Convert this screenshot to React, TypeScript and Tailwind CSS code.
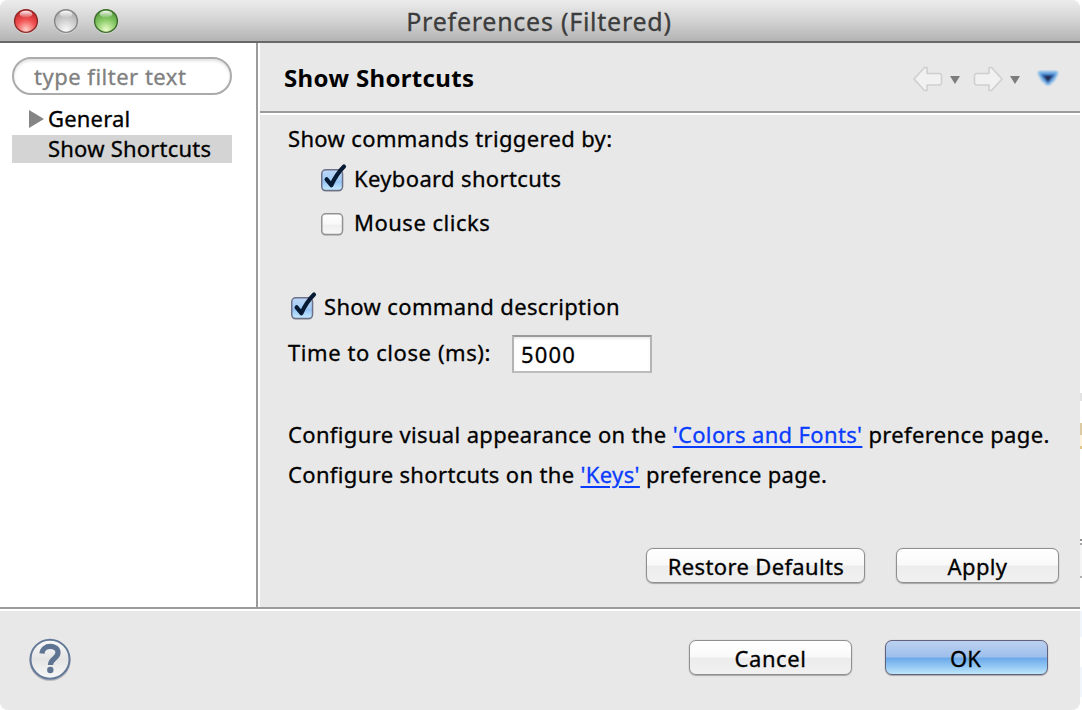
import type { ReactNode } from "react";

function Light({ id, rim, dark, light, glow }: { id: string; rim: string; dark: string; light: string; glow: string }) {
  return (
    <svg width="26" height="26" viewBox="0 0 26 26">
      <defs>
        <radialGradient id={id} cx="0.5" cy="0.88" r="0.85">
          <stop offset="0" stopColor={glow} />
          <stop offset="0.5" stopColor={light} />
          <stop offset="1" stopColor={dark} />
        </radialGradient>
        <linearGradient id={`${id}-shine`} x1="0" y1="0" x2="0" y2="1">
          <stop offset="0" stopColor="#fff" stopOpacity="0.95" />
          <stop offset="1" stopColor="#fff" stopOpacity="0.1" />
        </linearGradient>
      </defs>
      <circle cx="13" cy="13.8" r="12" fill="#fff" opacity="0.45" />
      <circle cx="13" cy="13" r="11.4" fill={`url(#${id})`} stroke={rim} strokeWidth="1.4" />
      <ellipse cx="13" cy="6.2" rx="6.3" ry="3.4" fill={`url(#${id}-shine)`} />
    </svg>
  );
}

function CheckBox({ checked }: { checked?: boolean }) {
  return (
    <svg width="30" height="32" viewBox="0 0 30 32" className="shrink-0">
      <defs>
        <linearGradient id="cb-on" x1="0" y1="0" x2="0" y2="1">
          <stop offset="0" stopColor="#bcd6f6" />
          <stop offset="0.5" stopColor="#a3cbf5" />
          <stop offset="0.55" stopColor="#93c3f5" />
          <stop offset="1" stopColor="#c8ecff" />
        </linearGradient>
        <linearGradient id="cb-off" x1="0" y1="0" x2="0" y2="1">
          <stop offset="0" stopColor="#fff" />
          <stop offset="0.5" stopColor="#f8f8f8" />
          <stop offset="0.55" stopColor="#efefef" />
          <stop offset="1" stopColor="#f8f8f8" />
        </linearGradient>
      </defs>
      <rect x="1" y="7.6" width="22" height="21.5" rx="4.5" fill="#000" opacity="0.12" />
      <rect x="1.75" y="6.75" width="20.8" height="20.8" rx="4" fill={checked ? "url(#cb-on)" : "url(#cb-off)"} stroke={checked ? "#6c7189" : "#929292"} strokeWidth="1.5" />
      {checked && (
        <path d="M6.6 16.3 L11.4 22.2 C14.5 15.5 19 8.5 24 3.6" fill="none" stroke="#061a33" strokeWidth="4.2" strokeLinecap="round" strokeLinejoin="round" />
      )}
    </svg>
  );
}

function Button({ primary, width, children }: { primary?: boolean; width: string; children: ReactNode }) {
  const tone = primary
    ? "border-[#62627f] bg-[linear-gradient(180deg,#bdd1f0_0%,#9dbfec_48%,#6ba9ea_52%,#8fc5f3_75%,#bfe6fa_100%)]"
    : "border-[#8f8f8f] bg-[linear-gradient(180deg,#ffffff_0%,#f9f9f9_48%,#ececec_52%,#f1f1f1_100%)]";
  return (
    <button className={`flex h-[35px] items-center justify-center rounded-[7px] border-[1.5px] pt-px leading-[30px] shadow-[0_1px_1px_rgba(0,0,0,0.25),0_0_1px_rgba(0,0,0,0.3)] ${tone} ${width}`}>
      {children}
    </button>
  );
}

function NavArrow({ flip }: { flip?: boolean }) {
  return (
    <svg width="30" height="26" viewBox="0 0 30 26" className={flip ? "-scale-x-100" : ""}>
      <path d="M1 13 L11.5 1.5 H14 V7.5 H27 L28.5 9 V17.5 L27 19 H14 V24.5 H11.5 Z" fill="#f1f1f1" stroke="#cfcfcf" strokeWidth="1.6" strokeLinejoin="round" />
    </svg>
  );
}

function Caret() {
  return (
    <svg width="10" height="8" viewBox="0 0 10 8">
      <path d="M0 0 H10 L5 8 Z" fill="#7d7d7d" />
    </svg>
  );
}

export default function App() {
  return (
    <div className="flex h-[710px] w-[1082px] overflow-hidden bg-white font-['Noto_Sans',sans-serif] text-[22px] leading-[30px] tracking-[0.35px] text-black [-webkit-text-stroke:0.3px]">
      <div className="flex w-[1080px] flex-col overflow-hidden rounded-[8px] bg-[#e8e8e8]">
        <header className="relative flex h-[43px] shrink-0 items-center justify-center border-b-2 border-[#686868] bg-[linear-gradient(180deg,#ececec_0%,#d3d3d3_50%,#b4b4b4_100%)] text-[25px] tracking-[0.75px] text-[#3c3c3c]">
          <div className="absolute left-[13px] top-[8px] flex gap-[14px]">
            <Light id="close" rim="#8c2a2a" dark="#c41f24" light="#f25454" glow="#ffd0c8" />
            <Light id="minimize" rim="#858585" dark="#a9a9a9" light="#cfcfcf" glow="#fafafa" />
            <Light id="zoom" rim="#3f6b2c" dark="#4f9a35" light="#8ccb6a" glow="#eaffc8" />
          </div>
          <h1 className="pr-[2px]">Preferences (Filtered)</h1>
        </header>

        <div className="flex h-[564px] shrink-0">
          <aside className="w-[256px] shrink-0 bg-white px-3 pt-[14px]">
            <div className="flex h-[38px] w-[220px] items-center rounded-full border-2 border-[#ababab] pb-px pl-5 tracking-[0.5px] text-[#808080] shadow-[inset_0_2px_3px_rgba(0,0,0,0.12)]">
              type filter text
            </div>
            <div className="mt-[9px] flex h-[30px] items-center pl-4 tracking-[0.2px]">
              <svg width="16" height="18" viewBox="0 0 16 18" className="mr-[4px]">
                <path d="M1 0 L16 9 L1 18 Z" fill="#858585" />
              </svg>
              <span className="pb-[2px]">General</span>
            </div>
            <div className="mt-px flex h-7 w-[220px] items-center bg-[#d4d4d4] pb-[2px] pl-[36px] tracking-[0.22px]">Show Shortcuts</div>
          </aside>
          <div className="w-[4px] shrink-0 border-l-2 border-[#9b9b9b] bg-white" />

          <main className="flex flex-1 flex-col">
            <div className="flex h-[72px] shrink-0 items-center justify-between border-b-2 border-white pl-[24px] shadow-[inset_0_-2px_0_#9b9b9b]">
              <h2 className="text-[24px] font-bold tracking-[0.35px] [-webkit-text-stroke:0px]">Show Shortcuts</h2>
              <div className="flex items-center pr-5 pt-[2px]">
                <NavArrow />
                <span className="ml-[7px] mr-[13px] mt-[2px]"><Caret /></span>
                <NavArrow flip />
                <span className="ml-[7px] mr-[16px] mt-[2px]"><Caret /></span>
                <svg width="24" height="20" viewBox="0 0 24 20">
                  <defs>
                    <filter id="soft" x="-20%" y="-20%" width="140%" height="140%"><feGaussianBlur stdDeviation="0.8" /></filter>
                  </defs>
                  <g filter="url(#soft)" strokeLinejoin="round">
                    <path d="M4 4 H20 L17 10 L12 14.5 L7 10 Z" fill="#4f93dc" stroke="#78b2ea" strokeWidth="4" />
                    <path d="M5 5.5 H19 L12 14 Z" fill="#1d4a92" stroke="#2f6fbd" />
                    <path d="M8 7.5 H16 L12 12.5 Z" fill="#251a35" />
                  </g>
                </svg>
              </div>
            </div>

            <div className="flex flex-1 flex-col pl-[28px] pr-[21px] pt-[8px]">
              <p>Show commands triggered by:</p>
              <label className="mt-[11px] flex h-[30px] items-center gap-[2px] pl-[32px]">
                <CheckBox checked />
                <span className="pb-[2px] pl-[2px]">Keyboard shortcuts</span>
              </label>
              <label className="mt-[14px] flex h-[30px] items-center gap-[2px] pl-[32px] tracking-[0.5px]">
                <CheckBox />
                <span className="pb-[2px] pl-[2px]">Mouse clicks</span>
              </label>
              <label className="mt-[54px] flex h-[30px] items-center gap-[2px] pl-[2px]">
                <CheckBox checked />
                <span className="pb-[2px] pl-[2px]">Show command description</span>
              </label>
              <div className="mt-[13px] flex h-[38px] items-center">
                <span className="w-[224px] pb-[4px] tracking-[0.58px]">Time to close (ms):</span>
                <div className="flex h-[38px] w-[140px] items-center border-2 border-t-[#9a9a9a] border-x-[#b4b4b4] border-b-[#bcbcbc] bg-white pl-[7px] tracking-[1.2px] shadow-[inset_0_2px_2px_rgba(0,0,0,0.08)]">
                  5000
                </div>
              </div>
              <p className="mt-[46px] whitespace-nowrap">
                Configure visual appearance on the <a className="text-[#0a3cff] underline decoration-2 underline-offset-[3px]">'Colors and Fonts'</a> preference page.
              </p>
              <p className="mt-[10px] whitespace-nowrap">
                Configure shortcuts on the <a className="text-[#0a3cff] underline decoration-2 underline-offset-[3px]">'Keys'</a> preference page.
              </p>
              <div className="mt-[59px] flex justify-end gap-[31px]">
                <Button width="w-[219px]"><span className="pl-px">Restore Defaults</span></Button>
                <Button width="w-[163px]">Apply</Button>
              </div>
            </div>
          </main>
        </div>

        <footer className="flex h-[103px] shrink-0 items-start border-t-2 border-[#9b9b9b] pl-[29px] pr-[32px] pt-[29px] shadow-[inset_0_2px_0_#fff]">
          <svg width="43" height="44" viewBox="0 0 43 44">
            <defs>
              <linearGradient id="help-bg" x1="0" y1="0" x2="0" y2="1">
                <stop offset="0" stopColor="#fafafa" />
                <stop offset="0.5" stopColor="#e4e4e4" />
                <stop offset="1" stopColor="#f8f8f8" />
              </linearGradient>
            </defs>
            <circle cx="21" cy="22.3" r="20" fill="none" stroke="#bcbcbc" strokeWidth="1.5" />
            <circle cx="21" cy="21.2" r="19.5" fill="url(#help-bg)" stroke="#647999" strokeWidth="2" />
            <path d="M13 15.5 C13.5 6 29 6.5 29 14.5 C29 20.5 21.5 20.5 21.5 27" fill="none" stroke="#5f7492" strokeWidth="5.2" />
            <circle cx="21.3" cy="32" r="3.2" fill="#5f7492" />
          </svg>
          <div className="ml-auto flex gap-[33px] pt-[2px]">
            <Button width="w-[163px]"><span className="tracking-[0.55px]">Cancel</span></Button>
            <Button primary width="w-[163px]"><span className="pr-[2px] tracking-normal">OK</span></Button>
          </div>
        </footer>
      </div>
      <div className="flex flex-1 flex-col bg-white pt-[393px]">
        <div className="h-[8px] bg-[#e2e2e2]" />
        <div className="mt-[22px] h-[12px] bg-[#dccba2]" />
        <div className="h-[11px] bg-[#fdf3dc]" />
        <div className="h-[3px] bg-[#e3c88a]" />
        <div className="mt-[90px] h-[2px] bg-[#8e8e8e]" />
        <div className="mt-[2px] h-[2px] bg-[#a5a5a5]" />
        <div className="h-[31px] bg-[#f5f5f5]" />
        <div className="h-[2px] bg-[#b0b0b0]" />
        <div className="mt-[33px] h-[26px] bg-[#f1f6fc]" />
        <div className="mt-[30px] h-[30px] bg-[#f1f6fc]" />
      </div>
    </div>
  );
}
